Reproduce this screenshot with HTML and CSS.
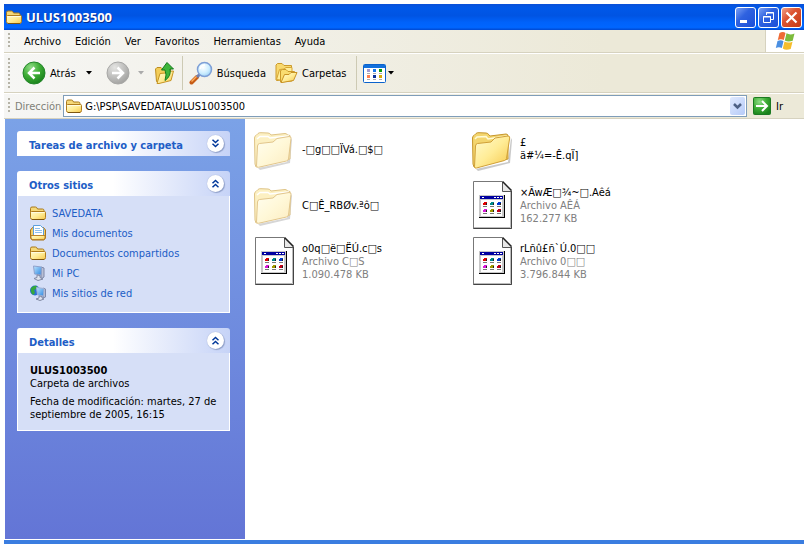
FILE: index.html
```html
<!DOCTYPE html>
<html lang="es">
<head>
<meta charset="utf-8">
<title>ULUS1003500</title>
<link rel="stylesheet" href="styles.css">
</head>
<body>
<svg class="defs" width="0" height="0" aria-hidden="true">
  <defs>
    <linearGradient id="gold" x1="0" y1="0" x2="1" y2="1"><stop offset="0" stop-color="#fffbd0"/><stop offset=".5" stop-color="#ffec96"/><stop offset="1" stop-color="#f6c84c"/></linearGradient>
    <linearGradient id="pale" x1="0" y1="0" x2="1" y2="1"><stop offset="0" stop-color="#fffef0"/><stop offset=".5" stop-color="#fff8d8"/><stop offset="1" stop-color="#fcecc0"/></linearGradient>
    <radialGradient id="green" cx=".35" cy=".25" r=".8"><stop offset="0" stop-color="#8fdc86"/><stop offset=".5" stop-color="#3fae37"/><stop offset="1" stop-color="#18801a"/></radialGradient>
    <radialGradient id="grey" cx=".35" cy=".25" r=".8"><stop offset="0" stop-color="#e4e4e2"/><stop offset=".6" stop-color="#bcbcba"/><stop offset="1" stop-color="#a0a09e"/></radialGradient>
    <radialGradient id="lens" cx=".4" cy=".35" r=".7"><stop offset="0" stop-color="#ffffff"/><stop offset=".6" stop-color="#cdeeff"/><stop offset="1" stop-color="#9ad0f5"/></radialGradient>
    <linearGradient id="screen" x1="0" y1="0" x2="1" y2="1"><stop offset="0" stop-color="#bfe6ff"/><stop offset="1" stop-color="#2c86e0"/></linearGradient>
    <symbol id="folder16" viewBox="0 0 16 16">
      <path d="M.5 12V3.500Q.5 2 2 2H5.500Q6.500 2 7 3L7.500 4H12.500Q14 4 14 5.500V8H.5Z" fill="#f5d878" stroke="#a8781c"/>
      <path d="M1.500 6.500H14.500Q15.500 6.500 15.500 7.500V12.500Q15.500 14.500 13.500 14.500H2.500Q.5 14.500.5 12.500V7.500Q.5 6.500 1.500 6.500Z" fill="url(#gold)" stroke="#b07c1c"/>
      <path d="M1.500 7.500H14.500" stroke="#fffbe0"/>
      <path d="M2 14.500H14" stroke="#7e5610"/>
    </symbol>
    <symbol id="folder48" viewBox="0 0 48 48">
      <path d="M8 44L40 37L43 13L44 15L42 38L10 46Z" fill="#888" opacity=".45"/>
      <path d="M5 39L4.500 13Q4.500 11 6 10.500L8 8.500Q9 7.500 11 7.700L18 8Q20 8 21 10L22 11L38 9Q40 9 40 11V34L6 42Z" fill="#f3d56e" stroke="#c6962c"/>
      <path d="M7 14L9 12L18 11.500L20 14L39 11" fill="none" stroke="#fffbd6" stroke-width="1.500"/>
      <path d="M6.500 42L7.500 21Q7.500 19 9.500 18.500L23 17L27 13L40 11Q42 11 41.700 13L38.500 33.500Q38 35 36.500 35.500L8.500 43Q6.500 43.500 6.500 42Z" fill="url(#gold)" stroke="#d0a038"/>
    </symbol>
    <symbol id="folder48pale" viewBox="0 0 48 48">
      <path d="M8 43L37 37L41 13L42 15L40 38L10 45Z" fill="#999" opacity=".4"/>
      <path d="M5 39L4.500 13Q4.500 11 6 10.500L8 8.500Q9 7.500 11 7.700L18 8Q20 8 21 10L35 8.500Q37 8.500 37.500 10L40 10.500V34L6 42Z" fill="#fcf0c2" stroke="#dfc487"/>
      <path d="M7 14L10 11.500H18L20 13L39 11" fill="none" stroke="#fff" stroke-width="1.500"/>
      <path d="M6.500 41L7.500 21Q7.500 19 9.500 18.500L23 17L27 13.500L39 11.500Q41.500 11.500 41 13.500L38.500 34Q38 35.500 36.500 36L8.500 42.300Q6.500 42.500 6.500 41Z" fill="url(#pale)" stroke="#e2c68c"/>
    </symbol>
    <symbol id="file48" viewBox="0 0 48 48">
      <path d="M5.500.5H34L43.500 10V47.500H5.500Z" fill="#fff" stroke="#777"/>
      <path d="M34.500 1V10.500H43" fill="#e8e8e8" stroke="#555"/>
      <path d="M34.500.5L43.500 9.500" stroke="#222" stroke-width="1.500"/>
      <path d="M43.500 10V47.500H5.500" fill="none" stroke="#444"/>
      <path d="M42.500 11V46.500H6" fill="none" stroke="#bbb"/>
      <rect x="11" y="14" width="26" height="23" fill="#000"/>
      <rect x="11" y="14" width="25" height="22" fill="#c8c8c8"/>
      <rect x="12" y="15" width="23" height="3" fill="#0000a0"/>
      <path d="M14 16.500h2M26 16.500h2M29 16.500h2M32 16.500h2" stroke="#fff"/>
      <rect x="13" y="19" width="21" height="16" fill="#fff"/>
      <path d="M15 25.500h4M22 25.500h4M29 25.500h4M15 32.500h4M22 32.500h4M29 32.500h4" stroke="#777"/>
      <path d="M16 21h3v3h-4v-2h1z" fill="#e00000"/><path d="M23 21h3v3h-4v-2h1z" fill="#008a8a"/><path d="M30 21h3v3h-4v-2h1z" fill="#0038d0"/>
      <path d="M16 28h3v3h-4v-2h1z" fill="#d818d8"/><path d="M23 28h3v3h-4v-2h1z" fill="#a09a00"/><path d="M30 28h3v3h-4v-2h1z" fill="#c00018"/>
      <path d="M18.500 22v2M25.500 22v2M32.500 22v2M18.500 29v2M25.500 29v2M32.500 29v2" fill="none" stroke="#222"/>
    </symbol>
  </defs>
</svg>

<div class="window">
  <header class="titlebar">
    <svg class="i16"><use href="#folder16"/></svg>
    <h1>ULUS1003500</h1>
    <div class="controls">
      <button class="ctl" aria-label="Minimizar"><svg viewBox="0 0 19 19"><rect x="4" y="12" width="7" height="3" fill="#fff"/></svg></button>
      <button class="ctl" aria-label="Restaurar"><svg viewBox="0 0 19 19" fill="none" stroke="#fff"><path d="M7.500 7V4.500H14.500V11.500H12M7 5h8"/><path d="M4.500 8.500H11.500V14.500H4.500ZM4 9h8"/></svg></button>
      <button class="ctl close" aria-label="Cerrar"><svg viewBox="0 0 19 19"><path d="M4.500 4.500L14.500 14.500M14.500 4.500L4.500 14.500" stroke="#fff" stroke-width="2.200"/></svg></button>
    </div>
  </header>

  <div class="menubar">
    <span class="grip"></span>
    <nav>
      <button>Archivo</button><button>Edición</button><button>Ver</button><button>Favoritos</button><button>Herramientas</button><button>Ayuda</button>
    </nav>
    <div class="flag">
      <svg width="20" height="20" viewBox="0 0 20 20">
        <path d="M4.500 2Q8 0 10.500 2L8.800 9Q6 7.500 2.800 9Z" fill="#ee6a35"/>
        <path d="M11.500 2.300Q15 4.500 19.500 2.500L17.700 9.800Q13 11.500 9.800 9.500Z" fill="#7cbb3c"/>
        <path d="M2.500 10Q6 8.500 8.500 10.200L6.800 17Q4 15.500.8 17Z" fill="#4a8fe2"/>
        <path d="M9.500 10.500Q13 12.500 17.500 10.700L15.700 18Q11 19.800 7.800 17.600Z" fill="#f6bd2c"/>
      </svg>
    </div>
  </div>

  <div class="toolbar">
    <span class="grip tall"></span>
    <button class="tool back"><svg width="24" height="24" viewBox="0 0 24 24"><circle cx="12" cy="12" r="11" fill="url(#green)" stroke="#23862a"/><path d="M12.500 6.500L7 12L12.500 17.500M7.500 12H18" fill="none" stroke="#fff" stroke-width="2.500"/></svg>Atrás</button>
    <button class="caret" aria-label="Historial atrás"><svg width="6" height="4" viewBox="0 0 6 4"><path d="M0 0H6L3 3.500Z"/></svg></button>
    <button class="tool forward" aria-label="Adelante"><svg width="24" height="24" viewBox="0 0 24 24"><circle cx="12" cy="12" r="11" fill="url(#grey)" stroke="#a8a8a6"/><path d="M11.500 6.500L17 12L11.500 17.500M6 12H16.500" fill="none" stroke="#fff" stroke-width="2.500"/></svg></button>
    <button class="caret off" aria-label="Historial adelante"><svg width="6" height="4" viewBox="0 0 6 4"><path d="M0 0H6L3 3.500Z"/></svg></button>
    <button class="tool up" aria-label="Arriba"><svg width="22" height="24" viewBox="0 0 22 24">
      <path d="M2.500 20.500L1.500 8L3 6.500H7L9 8.500L16.500 7.500V18L4 22Z" fill="#f3cd58" stroke="#bd8e20"/>
      <path d="M3 22.500L6 12.500L11.500 12L13 10.500L19.500 10L17 19.500L5 22.500Z" fill="url(#gold)" stroke="#c79524"/>
      <path d="M13 1.500L19.500 8H16Q17.500 15 11 19.500Q13 13.500 11 9H7.500Z" fill="#3db53b" stroke="#147a1c"/>
    </svg></button>
    <span class="sep"></span>
    <button class="tool search"><svg width="24" height="24" viewBox="0 0 24 24"><path d="M2.500 21.500L8 16" stroke="#c65c16" stroke-width="4" stroke-linecap="round"/><path d="M2.500 20.500L8 15" stroke="#ffad5c" stroke-width="1.500"/><path d="M8 16L11 13" stroke="#6f7fb0" stroke-width="3"/><circle cx="15.500" cy="8.500" r="7" fill="url(#lens)" stroke="#7e9fd6" stroke-width="1.500"/><path d="M11 8Q12 4 16 4" fill="none" stroke="#fff" stroke-width="1.500"/></svg>Búsqueda</button>
    <button class="tool folders"><svg width="24" height="24" viewBox="0 0 24 24">
      <path d="M2 19V4L3.500 2.500H8L10 4.500H17.500V9L14 18L3 19.500Z" fill="#f8d96e" stroke="#cc9a2a"/>
      <path d="M2.500 18.500L5.500 8.500L10 8L12 6.500H18V14L6 19Z" fill="#ffee98" stroke="#d6a535"/>
      <path d="M6.500 21V9.500L8.500 8.500H12L14 10.500H20.500V14L18 20Z" fill="#f9dc70" stroke="#cc9a2a"/>
      <path d="M7 21.500L10.500 13.500H15L17 11.500H23L19.500 19.500L8 21.500Z" fill="url(#gold)" stroke="#c99323"/>
    </svg>Carpetas</button>
    <span class="sep"></span>
    <button class="tool views" aria-label="Vistas"><svg width="23" height="19" viewBox="0 0 23 19">
      <rect x=".5" y=".5" width="22" height="18" rx="1" fill="#fff" stroke="#0a62cc"/><rect x="1" y="1" width="21" height="3" fill="#1270dc"/>
      <path d="M4 5h3v3H4z" fill="#a49bd0"/><path d="M10 5h3v3h-3z" fill="#1a78e8"/><path d="M16 5h3v3h-3z" fill="#0a9a0a"/><path d="M4 11h3v3H4z" fill="#ff8050"/><path d="M10 11h3v3h-3z" fill="#0a3098"/><path d="M16 11h3v3h-3z" fill="#d8a808"/>
      <path d="M4 9.500h3M10 9.500h3M16 9.500h3M4 15.500h3M10 15.500h3M16 15.500h3" stroke="#aaa"/>
    </svg><svg width="6" height="4" viewBox="0 0 6 4"><path d="M0 0H6L3 3.500Z"/></svg></button>
  </div>

  <form class="addressbar">
    <span class="grip"></span>
    <label for="address">Dirección</label>
    <div class="combo">
      <svg class="i16"><use href="#folder16"/></svg>
      <input id="address" type="text" value="G:\PSP\SAVEDATA\ULUS1003500">
      <button type="button" class="drop" aria-label="Desplegar"><svg width="9" height="7" viewBox="0 0 9 7"><path d="M1 1L4.500 4.500L8 1" fill="none" stroke="#4d6185" stroke-width="2.500"/></svg></button>
    </div>
    <button type="button" class="go"><svg width="18" height="18" viewBox="0 0 18 18"><rect x=".5" y=".5" width="17" height="17" rx="1" fill="url(#green)" stroke="#1b7a22"/><path d="M9 4L14 9L9 14M3 9H13.500" fill="none" stroke="#fff" stroke-width="2"/></svg>Ir</button>
  </form>

  <div class="content">
    <aside>
      <section class="panel">
        <div class="head"><h2>Tareas de archivo y carpeta</h2><button class="chev" aria-label="Expandir"><svg width="9" height="9" viewBox="0 0 9 9"><path d="M1.500.8L4.500 3.500L7.500.8M1.500 4.800L4.500 7.500L7.500 4.800"/></svg></button></div>
      </section>
      <section class="panel">
        <div class="head"><h2>Otros sitios</h2><button class="chev" aria-label="Contraer"><svg width="9" height="9" viewBox="0 0 9 9"><path d="M1.500 4.200L4.500 1.500L7.500 4.200M1.500 8.200L4.500 5.500L7.500 8.200"/></svg></button></div>
        <ul class="links">
          <li><a href="#"><svg class="i16"><use href="#folder16"/></svg>SAVEDATA</a></li>
          <li><a href="#"><svg class="i16" viewBox="0 0 16 16"><path d="M.5 13V5L2.500 2.500H13.500L15.500 5V13L14 15H2Z" fill="#f4cf68" stroke="#a8741a"/><path d="M3.500.5H10.500L13.500 3.500V11.500H3.500Z" fill="#fff" stroke="#5c9fdc"/><path d="M5 3.500h5M5 5.500h7M5 7.500h7" stroke="#8fc0ee"/><path d="M1 10.500H15V13L14 14.500H2L1 13Z" fill="url(#gold)" stroke="#b9842a"/></svg>Mis documentos</a></li>
          <li><a href="#"><svg class="i16"><use href="#folder16"/></svg>Documentos compartidos</a></li>
          <li><a href="#"><svg class="i16" viewBox="0 0 16 16"><path d="M11 2L14 3V12L11 14Z" fill="#b9bfd4" stroke="#7e88aa"/><path d="M3.500 1L11.500 2L11 10L4.500 9Z" fill="url(#screen)" stroke="#8fa2cc"/><path d="M7 10L10 10.500V12.500L13 14L8 15.500L4 13.500L7 12.500Z" fill="#dfe3ee" stroke="#8088a4"/></svg>Mi PC</a></li>
          <li><a href="#"><svg class="i16" viewBox="0 0 16 16"><circle cx="5" cy="5.500" r="5" fill="#2c6ed4"/><path d="M1 3Q4 0 7 1L6 4L4 5L5 8L3 10Q0 7 1 3Z" fill="#34a83c"/><path d="M13.500 3L15.500 4V12L13 13Z" fill="#b9bfd4" stroke="#7e88aa"/><path d="M6.500 2.500L14 3.500L13.500 11L7.500 10Z" fill="url(#screen)" stroke="#9fb0d4"/><path d="M9 11L12 11.500V13L14 14L10 15.500L6 14L9 13Z" fill="#dfe3ee" stroke="#8088a4"/></svg>Mis sitios de red</a></li>
        </ul>
      </section>
      <section class="panel">
        <div class="head"><h2>Detalles</h2><button class="chev" aria-label="Contraer"><svg width="9" height="9" viewBox="0 0 9 9"><path d="M1.500 4.200L4.500 1.500L7.500 4.200M1.500 8.200L4.500 5.500L7.500 8.200"/></svg></button></div>
        <div class="details">
          <strong>ULUS1003500</strong>
          <p>Carpeta de archivos</p>
          <p class="date">Fecha de modificación: martes, 27 de septiembre de 2005, 16:15</p>
        </div>
      </section>
    </aside>
    <main>
      <ul class="files">
        <li><svg class="i48"><use href="#folder48pale"/></svg><div><p>-□g□□ÏVá.□$□</p></div></li>
        <li><svg class="i48"><use href="#folder48"/></svg><div><p>£<br>ä#¼=-Ê.qÏ]</p></div></li>
        <li><svg class="i48"><use href="#folder48pale"/></svg><div><p>C□Ê_RBØv.ªô□</p></div></li>
        <li><svg class="i48"><use href="#file48"/></svg><div><p>×ÃwÆ□¾~□.Aêá</p><p class="meta">Archivo AÊÁ</p><p class="meta">162.277 KB</p></div></li>
        <li><svg class="i48"><use href="#file48"/></svg><div><p>o0q□ë□ËÚ.c□s</p><p class="meta">Archivo C□S</p><p class="meta">1.090.478 KB</p></div></li>
        <li><svg class="i48"><use href="#file48"/></svg><div><p>rLñû£ñ`Ú.0□□</p><p class="meta">Archivo 0□□</p><p class="meta">3.796.844 KB</p></div></li>
      </ul>
    </main>
  </div>
</div>
</body>
</html>
```
FILE: styles.css
```css
* { box-sizing: border-box; }
body {
  margin: 0;
  background: #fff;
  color: #000;
  font: 11px/13px "DejaVu Sans Condensed", Tahoma, "DejaVu Sans", sans-serif;
}
h1, h2, p, ul { margin: 0; padding: 0; font-size: inherit; }
ul { list-style: none; }
button, input { font: inherit; color: inherit; border: 0; padding: 0; background: none; }
svg { display: block; flex: none; }
.defs { position: absolute; }
.i16 { width: 16px; height: 16px; }
.i48 { width: 48px; height: 48px; }

.window {
  display: flex;
  flex-direction: column;
  min-height: 100vh;
  padding: 4px 4px 0;
}

.titlebar {
  display: flex;
  align-items: center;
  gap: 4px;
  height: 26px;
  padding: 0 2px;
  background: linear-gradient(#0a50d8 0, #0058e8 15%, #0054e3 45%, #0062fa 70%, #0066ff 90%, #0048d0 100%);
}
.titlebar h1 {
  flex: 1;
  color: #fff;
  font: bold 13px/16px "Noto Sans", "Trebuchet MS", sans-serif;
  text-shadow: 1px 1px #0a2f8c;
}
.controls { display: flex; gap: 2px; }
.ctl {
  width: 21px;
  height: 21px;
  border: 1px solid #fff;
  border-radius: 3px;
  background: linear-gradient(135deg, #7ba0f4, #2f62e0 40%, #1c4fd8);
}
.ctl.close { background: linear-gradient(135deg, #f0a088, #dc5433 40%, #c43a14); }

.menubar, .toolbar, .addressbar {
  display: flex;
  align-items: center;
  padding-left: 3px;
  background: linear-gradient(90deg, #f6f6f4, #ece9d8 75%);
}
.grip {
  width: 3px;
  height: 16px;
  margin-right: 5px;
  background: repeating-linear-gradient(#b6b4a8 0 2px, transparent 2px 4px) no-repeat 1px 0 / 2px 100%;
}
.grip.tall { height: 30px; margin-right: 12px; }

.menubar { height: 23px; border-bottom: 1px solid #d6d2bf; }
.menubar nav { display: flex; flex: 1; padding-left: 2px; }
.menubar nav button { padding: 0 7px; }
.flag {
  display: flex;
  align-items: center;
  justify-content: center;
  align-self: stretch;
  width: 39px;
  border-left: 1px solid #d6d2bf;
  background: #fff;
}

.toolbar { height: 40px; border-top: 1px solid #fff; border-bottom: 1px solid #d6d2bf; }
.tool { display: flex; align-items: center; gap: 4px; }
.caret { width: 18px; height: 24px; display: grid; place-items: center; margin-left: 4px; }
.caret.off { fill: #aaa; margin-left: 2px; }
.forward { margin-left: 8px; }
.up { margin-left: 4px; }
.sep { width: 1px; height: 34px; margin: 0 6px; background: #cdcab4; }
.folders { margin-left: 8px; margin-right: 4px; }
.views { gap: 2px; }

.addressbar { height: 26px; border-top: 1px solid #fff; border-bottom: 1px solid #d6d2bf; }
.addressbar label { color: #807f78; margin-right: 2px; }
.combo {
  display: flex;
  flex: 1;
  align-items: center;
  gap: 3px;
  height: 22px;
  padding: 0 1px 0 2px;
  border: 1px solid #7f9db9;
  background: #fff;
}
.combo input { flex: 1; min-width: 0; outline: 0; }
.drop {
  display: grid;
  place-items: center;
  width: 15px;
  height: 18px;
  border-radius: 2px;
  background: linear-gradient(135deg, #e0eafe, #b6cbf8);
}
.go { display: flex; align-items: center; gap: 5px; width: 51px; margin-left: 6px; }

.content {
  display: flex;
  flex: 1;
  padding-left: 1px;
  border-bottom: 4px solid #3a7de0;
}
aside {
  width: 240px;
  margin-bottom: 1px;
  padding: 12px 15px 12px 12px;
  display: flex;
  flex-direction: column;
  gap: 15px;
  background: linear-gradient(#7ba2e7, #6375d6);
}
.head {
  display: flex;
  align-items: center;
  justify-content: space-between;
  height: 25px;
  padding: 0 6px 0 12px;
  border-radius: 3px 3px 0 0;
  background: linear-gradient(90deg, #fff 45%, #c6d3f7);
}
.head h2 { color: #215dc6; font-weight: bold; padding-top: 3px; }
.chev {
  display: grid;
  place-items: center;
  width: 17px;
  height: 17px;
  border-radius: 50%;
  background: #fff;
  box-shadow: 1px 1px 1px #8f9fc8, 0 0 1px #8f9fc8;
}
.chev path { fill: none; stroke: #00379a; stroke-width: 1.500; }
.links, .details { border: 1px solid #fff; border-top: 0; background: #d6dff7; }
.links { padding: 7px 12px 9px; }
.links a {
  display: flex;
  align-items: center;
  gap: 6px;
  height: 20px;
  color: #215dc6;
  text-decoration: none;
}
.details { padding: 11px 12px 9px; }
.details strong { display: block; }
.details .date { margin-top: 5px; }

main { flex: 1; padding: 6px 5px; }
.files {
  display: grid;
  grid-template-columns: repeat(auto-fill, 218px);
  gap: 8px 0;
  max-width: 540px;
}
.files li { display: flex; align-items: center; gap: 4px; height: 48px; }
.meta { color: #808080; }
```
